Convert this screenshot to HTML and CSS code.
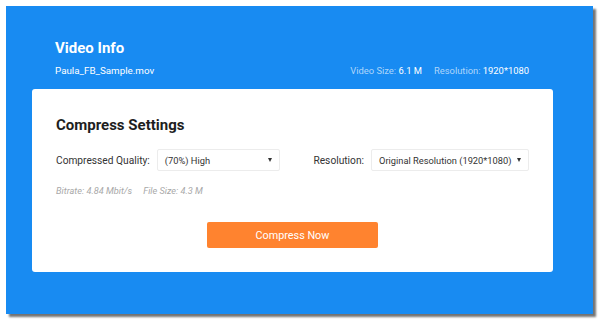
FILE: index.html
```html
<!DOCTYPE html>
<html lang="en">
<head>
  <meta charset="UTF-8">
  <title>Video Compressor</title>
  <link rel="stylesheet" href="styles.css">
</head>
<body>
  <div class="panel">
    <div class="video-info">
      <h1>Video Info</h1>
      <div class="info-row">
        <span class="file-name">Paula_FB_Sample.mov</span>
        <div class="meta">
          <span class="meta-item"><span class="meta-label">Video Size:</span> 6.1 M</span>
          <span class="meta-item"><span class="meta-label">Resolution:</span> 1920*1080</span>
        </div>
      </div>
    </div>

    <div class="card">
      <h2>Compress Settings</h2>

      <div class="settings-row">
        <div class="field">
          <label>Compressed Quality:</label>
          <div class="select quality">
            <span>(70%) High</span>
            <span class="arrow"></span>
          </div>
        </div>
        <div class="field">
          <label>Resolution:</label>
          <div class="select resolution">
            <span>Original Resolution (1920*1080)</span>
            <span class="arrow"></span>
          </div>
        </div>
      </div>

      <div class="stats">
        <span>Bitrate: 4.84 Mbit/s</span>
        <span>File Size: 4.3 M</span>
      </div>

      <div class="actions">
        <button>Compress Now</button>
      </div>
    </div>
  </div>
</body>
</html>
```

FILE: styles.css
```css
body {
  margin: 0;
  background: #fff;
  font-family: Roboto, "Liberation Sans", Arial, sans-serif;
}

.panel {
  margin: 6px;
  width: 587px;
  height: 308px;
  box-sizing: border-box;
  padding: 33px 40px 0 26px;
  background: #188bf2;
  box-shadow: 3px 3px 2px rgba(0, 0, 0, 0.55);
}

.video-info {
  padding: 0 24px 0 23px;
  color: #fff;
}

h1 {
  margin: 0;
  font-size: 15px;
  line-height: 18px;
  font-weight: bold;
}

.info-row {
  display: flex;
  justify-content: space-between;
  align-items: baseline;
  margin-top: 7px;
  line-height: 13px;
}

.file-name {
  font-size: 9.8px;
}

.meta {
  display: flex;
  gap: 12px;
  font-size: 9.4px;
}

.meta-label {
  color: rgba(255, 255, 255, 0.65);
}

.card {
  margin-top: 12px;
  width: 521px;
  box-sizing: border-box;
  padding: 27px 24px 24px 24px;
  background: #fff;
  border-radius: 3px;
}

h2 {
  margin: 0;
  font-size: 15px;
  line-height: 18px;
  font-weight: bold;
  color: #1e1e1e;
}

.settings-row {
  display: flex;
  justify-content: space-between;
  margin-top: 15px;
}

.field {
  display: flex;
  align-items: center;
  gap: 7px;
  font-size: 10.2px;
  color: #333;
}

.select {
  display: flex;
  align-items: center;
  justify-content: space-between;
  height: 22px;
  box-sizing: border-box;
  padding: 0 7px 0 7px;
  border: 1px solid #ececec;
  border-radius: 2px;
  font-size: 9.3px;
  white-space: nowrap;
  color: #333;
}

.quality {
  width: 123px;
}

.resolution {
  width: 158px;
}

.arrow {
  width: 0;
  height: 0;
  border-left: 2.5px solid transparent;
  border-right: 2.5px solid transparent;
  border-top: 4px solid #333;
}

.stats {
  display: flex;
  gap: 11px;
  margin-top: 14px;
  font-size: 9.2px;
  line-height: 12px;
  font-style: italic;
  color: #a8a8a8;
}

.actions {
  display: flex;
  justify-content: center;
  margin-top: 25px;
}

button {
  width: 171px;
  height: 26px;
  background: #ff832f;
  color: #fff;
  border: none;
  border-radius: 2px;
  font-family: Roboto, "Liberation Sans", Arial, sans-serif;
  font-size: 10.8px;
  cursor: pointer;
}
```
